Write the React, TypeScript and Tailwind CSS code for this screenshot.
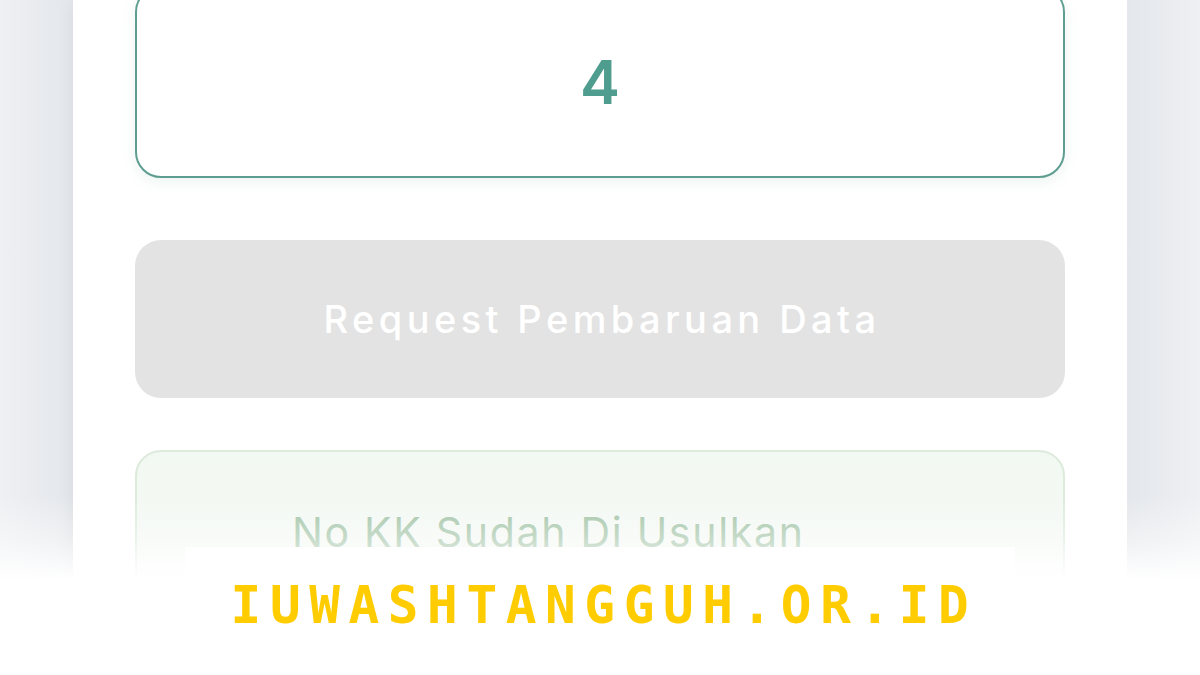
import React from "react";

export default function App() {
  return (
    <div className="relative w-[1200px] h-[675px] overflow-hidden bg-[#eceef2]" style={{ fontFamily: "Inter, 'Open Sans', sans-serif" }}>
      <div className="flex h-full">
        <div className="w-[73px] shrink-0 bg-gradient-to-r from-[#eef0f3] to-[#e4e7eb]" />
        <div className="w-[1054px] shrink-0 bg-white shadow-[0_0_18px_rgba(0,0,0,0.06)] px-[62px] flex flex-col">
          <div className="mt-[-14px] h-[192px] shrink-0 rounded-[26px] border-2 border-[#5e9e90] bg-white shadow-[0_4px_14px_rgba(98,163,148,0.12)] flex items-center justify-center">
            <span className="text-[60px] font-semibold leading-none text-[#4f9d8e] mt-[0px]">4</span>
          </div>
          <div className="mt-[62px] h-[158px] shrink-0 rounded-[26px] bg-[#e3e3e3] flex items-center justify-center">
            <span className="text-[38px] font-medium text-white tracking-[4.4px] pl-[4px]">Request Pembaruan Data</span>
          </div>
          <div className="mt-[52px] h-[220px] shrink-0 rounded-[26px] border-2 border-[#dcebdc] bg-gradient-to-b from-[#f2f8f2] to-[#f6f9f6] pl-[155px] pt-[50px]">
            <span className="text-[41px] font-normal leading-[60px] text-[#9fc2a4] tracking-[1.7px]">No KK Sudah Di Usulkan</span>
          </div>
        </div>
        <div className="flex-1 bg-gradient-to-r from-[#e4e7eb] to-[#eef0f3]" />
      </div>

      <div className="absolute left-0 right-0 top-[495px] h-[85px] bg-gradient-to-b from-[rgba(255,255,255,0)] via-[rgba(255,255,255,0.4)] to-white" />
      <div className="absolute left-0 right-0 top-[578px] bottom-0 bg-white" />
      <div className="absolute left-[185px] w-[830px] top-[547px] bottom-0 bg-white" />

      <div className="absolute left-0 right-0 top-[578px] flex justify-center">
        <span
          className="text-[51px] font-bold leading-[56px] text-[#ffcc00] tracking-[8.6px] pl-[8px]"
          style={{ fontFamily: "'DejaVu Sans Mono', 'Liberation Mono', monospace" }}
        >
          IUWASHTANGGUH.OR.ID
        </span>
      </div>
    </div>
  );
}
